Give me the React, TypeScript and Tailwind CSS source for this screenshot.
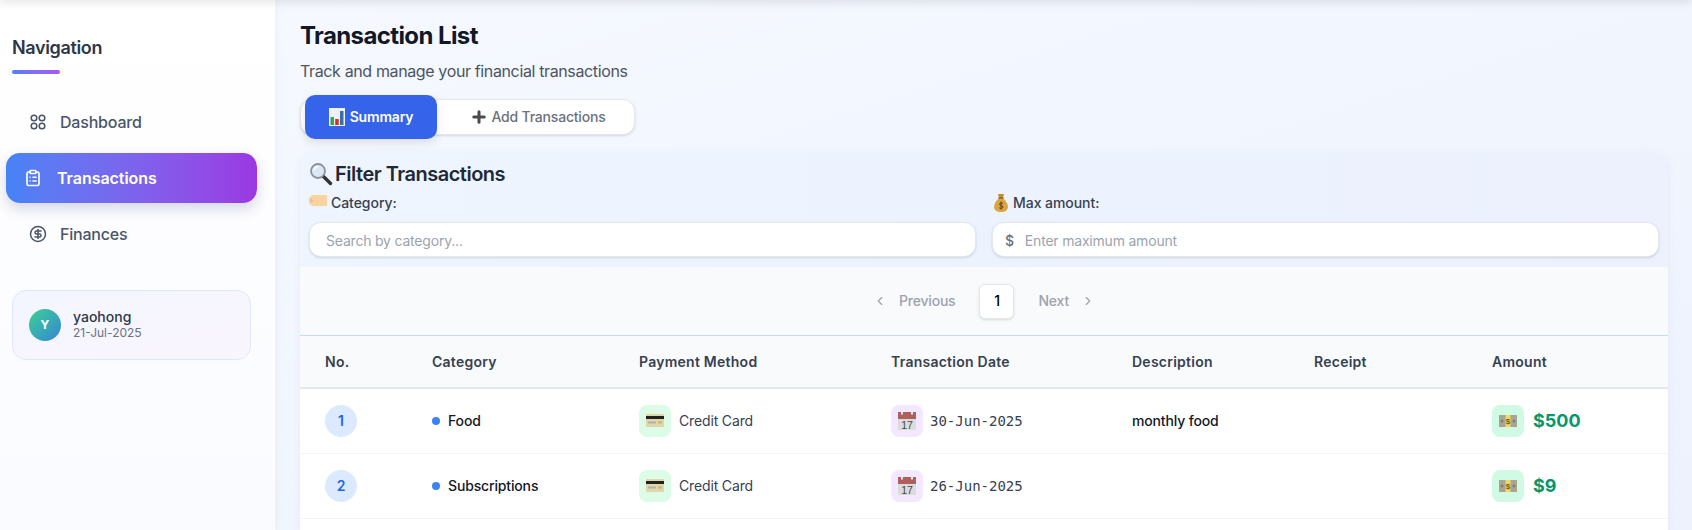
import { ChevronLeft, ChevronRight, CircleDollarSign, ClipboardList, Plus } from "lucide-react";

const FONT = "font-['Inter','Noto_Sans',sans-serif]";

function DashIcon() {
  return (
    <svg width="16" height="16" viewBox="0 0 16 16" fill="none" stroke="currentColor" strokeWidth="1.5">
      <circle cx="4" cy="4" r="2.8" />
      <circle cx="12" cy="4" r="2.8" />
      <circle cx="4" cy="12" r="2.8" />
      <circle cx="12" cy="12" r="2.8" />
    </svg>
  );
}

function ChartEmoji() {
  return (
    <svg width="16" height="18" viewBox="0 0 16 18" className="shrink-0">
      <rect x="0" y="0" width="16" height="18" fill="#eef1f4" />
      <rect x="1.5" y="9" width="3.5" height="8" fill="#3fa34d" />
      <rect x="6.2" y="11" width="3.5" height="6" fill="#d1301f" />
      <rect x="11" y="3" width="3.5" height="14" fill="#3a6ea5" />
    </svg>
  );
}

function SearchEmoji() {
  return (
    <svg width="24" height="24" viewBox="0 0 24 24" className="shrink-0">
      <path d="M14 14l7.5 7.5" stroke="#333" strokeWidth="3.4" strokeLinecap="round" />
      <circle cx="9" cy="9" r="7" fill="#dbe7f3" stroke="#8a949e" strokeWidth="1.8" />
      <path d="M5 8a4.5 4.5 0 0 1 4-3.5" stroke="#fff" strokeWidth="1.6" fill="none" />
    </svg>
  );
}

function TagEmoji() {
  return (
    <svg width="18" height="12" viewBox="0 0 18 12" className="shrink-0 -translate-y-[2px]">
      <path d="M3 0h15v11H3L0 8V3z" fill="#f8d4a0" />
      <circle cx="2.5" cy="5.5" r="0.9" fill="none" stroke="#b89468" strokeWidth="0.5" />
    </svg>
  );
}

function BagEmoji() {
  return (
    <svg width="14" height="18" viewBox="0 0 14 18" className="ml-[2px] shrink-0">
      <path d="M4 0h6L9 4h-4z" fill="#c68f2e" />
      <path d="M5 4h4c3 3 5 6 5 9 0 3-3 5-7 5s-7-2-7-5c0-3 2-6 5-9z" fill="#d9a441" />
      <rect x="4.5" y="3.4" width="5" height="1.2" fill="#7a5a1d" />
      <path d="M9 9.5C8 8.6 5.5 8.8 5.5 10.3S9 11.5 9 13s-2.6 1.7-3.8.8M7 7.6v8" stroke="#5e4312" strokeWidth="1" fill="none" />
    </svg>
  );
}

function CardEmoji() {
  return (
    <svg width="18" height="13" viewBox="0 0 18 13">
      <rect x="0" y="0" width="18" height="13" rx="1" fill="#e3d6a6" />
      <rect x="0" y="2" width="18" height="3" fill="#222" />
      <rect x="2" y="7.5" width="8" height="2" fill="#a9b4b8" />
      <rect x="12" y="7.5" width="4" height="2" fill="#c2b582" />
    </svg>
  );
}

function CalendarEmoji() {
  return (
    <svg width="18" height="18" viewBox="0 0 18 18">
      <rect x="0" y="0" width="18" height="18" fill="#dcdcdc" />
      <rect x="0" y="0" width="18" height="7" fill="#b0605c" />
      <rect x="3" y="0" width="2" height="2.5" fill="#e9e9e9" />
      <rect x="13" y="0" width="2" height="2.5" fill="#e9e9e9" />
      <text x="9" y="16.5" textAnchor="middle" fontSize="10.5" fill="#444" fontFamily="Liberation Sans, sans-serif">17</text>
    </svg>
  );
}

function CashEmoji() {
  return (
    <svg width="18" height="12" viewBox="0 0 18 12">
      <rect x="0" y="0" width="18" height="12" fill="#a8a594" />
      <rect x="6.5" y="0" width="5" height="12" fill="#f6d860" />
      <circle cx="3" cy="6" r="1.5" fill="#83806f" />
      <circle cx="15" cy="6" r="1.5" fill="#83806f" />
      <text x="9" y="9" textAnchor="middle" fontSize="8" fill="#6b5a1a" fontFamily="Liberation Sans, sans-serif">$</text>
    </svg>
  );
}

const ROWS = [
  { no: 1, category: "Food", date: "30-Jun-2025", description: "monthly food", amount: "$500" },
  { no: 2, category: "Subscriptions", date: "26-Jun-2025", description: "", amount: "$9" },
];

export default function App() {
  return (
    <div className={`relative flex h-[530px] overflow-hidden ${FONT} bg-gradient-to-br from-[#f6f9ff] to-[#edf2fd]`}>
      {/* top bar shadow */}
      <div className="absolute inset-x-0 -top-2 z-10 h-2 shadow-[0_2px_10px_rgba(0,0,0,0.12)]" />

      {/* Sidebar */}
      <aside className="w-[275px] shrink-0 bg-gradient-to-b from-white to-[#fafbff] shadow-[2px_0_8px_rgba(0,0,0,0.03)]">
        <div className="px-3 pt-9">
          <h2 className="text-lg leading-6 font-semibold tracking-[-0.35px] text-[#2d3748]">Navigation</h2>
          <div className="mt-2.5 h-1 w-12 rounded-full bg-gradient-to-r from-[#4f7ff5] to-[#a855f7]" />
        </div>
        <nav className="mt-[23px] px-1.5">
          <div className="flex h-[50px] items-center gap-3.5 pl-6 text-base font-medium tracking-[-0.2px] text-[#4a5568]">
            <DashIcon />
            Dashboard
          </div>
          <div className="mt-1.5 flex h-[50px] w-[251px] items-center gap-[15px] rounded-[14px] bg-gradient-to-r from-[#4583f6] to-[#9b37e3] pl-[18px] text-base font-semibold tracking-[-0.05px] text-white shadow-[0_6px_14px_rgba(60,60,120,0.2)]">
            <ClipboardList size={18} strokeWidth={2.2} />
            Transactions
          </div>
          <div className="mt-1.5 flex h-[50px] items-center gap-[13px] pl-[23px] text-base font-medium tracking-[-0.2px] text-[#4a5568]">
            <CircleDollarSign size={18} strokeWidth={2} />
            Finances
          </div>
        </nav>
        <div className="mx-3 mt-[31px] flex h-[70px] w-[239px] items-center gap-3 rounded-[14px] border border-[#dfe7fb] bg-gradient-to-br from-[#f3f6ff] to-[#faf5fe] pl-4">
          <div className="flex h-8 w-8 items-center justify-center rounded-full bg-gradient-to-br from-[#3fd08a] to-[#3b82d6] text-xs font-bold text-white">
            Y
          </div>
          <div className="-mt-px">
            <div className="text-sm leading-[17px] font-medium text-[#2d3748]">yaohong</div>
            <div className="text-xs leading-[16px] text-[#6b7280]">21-Jul-2025</div>
          </div>
        </div>
      </aside>

      {/* Main */}
      <main className="flex min-w-0 flex-1 flex-col pt-5 pr-6 pl-[25px]">
        <h1 className="text-2xl leading-8 font-bold tracking-[-0.6px] text-[#111827]">Transaction List</h1>
        <p className="mt-[7px] text-base leading-6 tracking-[-0.37px] text-[#4b5563]">Track and manage your financial transactions</p>

        <div className="mt-4 flex h-9 w-[335px] items-center rounded-xl border border-[#e5e7eb] bg-white pl-1 shadow-sm">
          <div className="flex h-11 w-[132px] shrink-0 items-center justify-center gap-[5px] rounded-[10px] bg-[#3563e9] text-sm font-semibold tracking-[-0.2px] text-white shadow-[0_4px_10px_rgba(0,0,0,0.1)]">
            <ChartEmoji />
            Summary
          </div>
          <div className="flex flex-1 items-center justify-center gap-[5px] pl-[7px] text-sm font-medium tracking-[-0.2px] text-[#6b7280]">
            <Plus size={18} strokeWidth={4} className="-mx-[2px] text-[#4b4b4b]" />
            Add Transactions
          </div>
        </div>

        <section className="mt-[17px] flex-1 overflow-hidden rounded-t-xl bg-white shadow-[0_2px_10px_rgba(0,0,0,0.05)]">
          {/* Filter */}
          <div className="h-[115px] bg-gradient-to-r from-[#eef5ff] to-[#ecf1fd] px-[9px] pt-2">
            <h3 className="flex items-center gap-0.5 text-xl leading-7 font-semibold tracking-[-0.5px] text-[#1f2937]">
              <SearchEmoji />
              Filter Transactions
            </h3>
            <div className="mt-[5px] grid grid-cols-2 gap-4">
              <div>
                <label className="flex h-5 items-center gap-1 text-sm font-medium tracking-[-0.05px] text-[#374151]">
                  <TagEmoji />
                  Category:
                </label>
                <div className="mt-[9px] flex h-[35px] items-center rounded-xl border border-[#e5e7eb] bg-white pt-[2px] pl-4 text-sm tracking-[-0.2px] text-[#9ca3af] shadow-sm">
                  Search by category...
                </div>
              </div>
              <div>
                <label className="flex h-5 items-center gap-[5px] text-sm font-medium tracking-[-0.05px] text-[#374151]">
                  <BagEmoji />
                  Max amount:
                </label>
                <div className="mt-[9px] flex h-[35px] items-center gap-[11px] rounded-xl border border-[#e5e7eb] bg-white pt-[2px] pl-3 text-sm tracking-[-0.2px] text-[#9ca3af] shadow-sm">
                  <span className="font-medium text-[#6b7280]">$</span>
                  Enter maximum amount
                </div>
              </div>
            </div>
          </div>

          {/* Pagination */}
          <div className="flex h-[69px] items-center justify-center border-b border-[#bfdbfe] bg-[#f9fafb] text-sm font-medium tracking-[-0.2px] text-[#9ca3af]">
            <div className="flex items-center gap-2">
              <ChevronLeft size={14} />
              <span className="ml-1">Previous</span>
            </div>
            <div className="mx-6 flex h-[35px] w-[35px] items-center justify-center rounded-md border border-[#e5e7eb] bg-white text-black shadow-sm">
              1
            </div>
            <div className="flex items-center gap-2">
              <span className="mr-1">Next</span>
              <ChevronRight size={14} />
            </div>
          </div>

          {/* Table */}
          <table className="w-full table-fixed border-collapse text-left text-sm">
            <colgroup>
              <col className="w-[106px]" />
              <col className="w-[207px]" />
              <col className="w-[253px]" />
              <col className="w-[241px]" />
              <col className="w-[182px]" />
              <col className="w-[178px]" />
              <col />
            </colgroup>
            <thead>
              <tr className="h-[52px] border-b-2 border-[#e5e7eb] bg-[#f9fafb] font-semibold tracking-[0.25px] text-[#374151]">
                <th className="pl-[25px] font-semibold">No.</th>
                <th className="pl-[26px] font-semibold">Category</th>
                <th className="pl-[26px] font-semibold">Payment Method</th>
                <th className="pl-[25px] font-semibold">Transaction Date</th>
                <th className="pl-[25px] font-semibold">Description</th>
                <th className="pl-[25px] font-semibold">Receipt</th>
                <th className="pl-[25px] font-semibold">Amount</th>
              </tr>
            </thead>
            <tbody>
              {ROWS.map((row) => (
                <tr key={row.no} className="h-[65px] border-b border-[#f3f4f6]">
                  <td className="pl-[25px]">
                    <span className="flex h-8 w-8 items-center justify-center rounded-full bg-[#dbeafe] font-semibold text-[#2563eb]">
                      {row.no}
                    </span>
                  </td>
                  <td className="pl-[26px]">
                    <span className="flex items-center gap-2 font-medium tracking-[-0.15px] text-[#111827]">
                      <span className="h-2 w-2 rounded-full bg-[#3b82f6]" />
                      {row.category}
                    </span>
                  </td>
                  <td className="pl-[26px]">
                    <span className="flex items-center gap-2 tracking-[-0.15px] text-[#374151]">
                      <span className="flex h-8 w-8 items-center justify-center rounded-lg bg-[#dcfce7]">
                        <CardEmoji />
                      </span>
                      Credit Card
                    </span>
                  </td>
                  <td className="pl-[25px]">
                    <span className="flex items-center gap-[7px] font-['DejaVu_Sans_Mono',monospace] text-[#374151]">
                      <span className="flex h-8 w-8 items-center justify-center rounded-lg bg-[#f3e8ff]">
                        <CalendarEmoji />
                      </span>
                      {row.date}
                    </span>
                  </td>
                  <td className="pl-[25px] font-medium tracking-[-0.15px] text-[#111827]">{row.description}</td>
                  <td className="pl-[25px]" />
                  <td className="pl-[25px]">
                    <span className="flex items-center gap-[9px] text-lg font-bold text-[#059669]">
                      <span className="flex h-8 w-8 items-center justify-center rounded-lg bg-[#d1fae5]">
                        <CashEmoji />
                      </span>
                      {row.amount}
                    </span>
                  </td>
                </tr>
              ))}
            </tbody>
          </table>
        </section>
      </main>
    </div>
  );
}
